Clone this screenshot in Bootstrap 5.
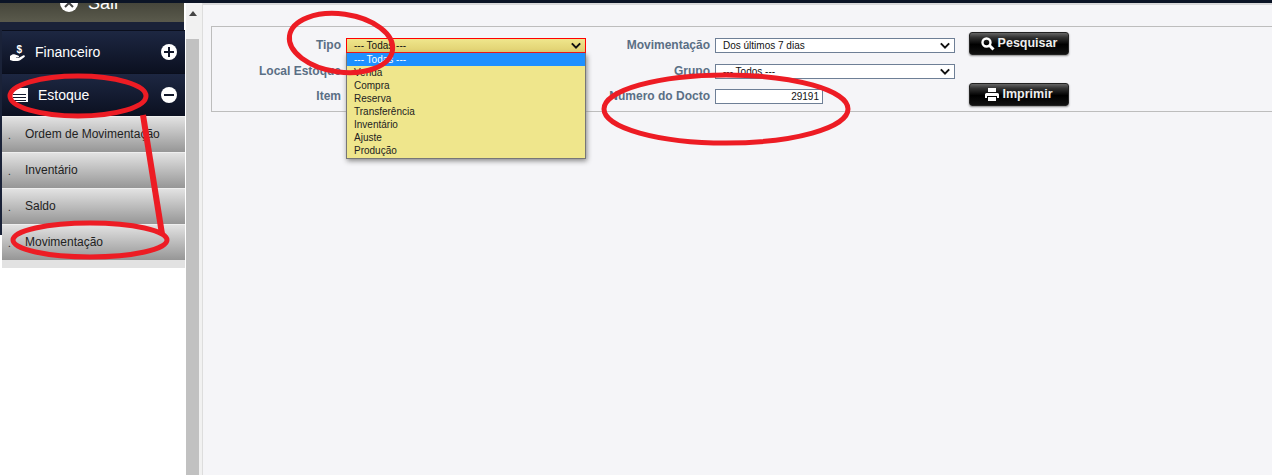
<!DOCTYPE html>
<html lang="pt"><head><meta charset="utf-8"><title>Movimentação</title>
<link href="https://cdn.jsdelivr.net/npm/bootstrap@5.3.0/dist/css/bootstrap.min.css" rel="stylesheet">
<style>
html,body{height:100%;overflow:hidden}
body{background:#f5f5f8;font-family:"Liberation Sans",Arial,sans-serif;color:#000}
.shell{height:475px;position:relative}
.topline{height:3px;background:#0b1426;flex:none}
.side{width:186px;flex:none;background:#fff;height:472px}
.sairbar{height:19px;width:184px;background:linear-gradient(#46463b,#5a5a4c);color:#fff;font-size:18px;overflow:hidden;line-height:1}
.sairin{margin-top:-9px;padding-left:60px;gap:10px}
.navwrap{background:linear-gradient(#1a2238 213px,#fff 213px);padding-top:8px;width:184px}
.menuhd{height:43px;margin-left:2px;width:183px;background:linear-gradient(#1d2742,#0b1020);border-top:1px solid #0a0e1c;color:#fff;font-size:14px;padding:0 8px}
.menuhd svg{flex:none}
.icw{margin-right:10px}
.circ{width:16px;height:16px;border-radius:50%;background:#fff;position:relative;flex:none;margin-left:auto}
.circ::before{content:"";position:absolute;left:3px;right:3px;top:7px;height:2px;background:#101629}
.circ.plus::after{content:"";position:absolute;top:3px;bottom:3px;left:7px;width:2px;background:#101629}
.sub{height:36px;margin-left:2px;width:183px;background:linear-gradient(#e2e2e2,#969696);border-top:1px solid #eee;font-size:12px;color:#222;padding:0 0 2px 6px;gap:14px;white-space:nowrap}
.subend{height:8px;margin-left:2px;width:183px;background:#e2e2e2}
.dotm{font-size:10px;width:3px;line-height:1;padding-top:4px}
.sbar{width:16px;flex:none;background:#f1f1f1;height:472px}
.sbtop{height:36px;text-align:center;padding-top:8px}
.sbarrow{display:block;width:0;height:0;margin-left:3px;border:4px solid transparent;border-top:0;border-bottom:5px solid #444}
.sbthumb{height:436px;background:#c1c1c1;width:13px}
.main{flex:1 1 auto;padding-top:21px;border-left:1px solid #ddd;min-width:0;border-top:2px solid #d8d8da}
.fbox{margin-left:8px;height:86px;border:1px solid #bdbdbd;border-right:0;position:relative;padding-top:11px}
.lbl{font-size:12px;font-weight:700;color:#5a6f85;text-align:right;flex:none;white-space:nowrap;line-height:14px}
.rowa{height:26px}
.rowb{height:25px}
.col1{width:129px}
.col2{width:124px}
.fake{font-size:10px;height:15px;border:1px solid #6e7f96;background:#fff;padding-left:7px;line-height:13px;position:relative;flex:none;color:#111}
.chev{position:absolute;right:4px;top:3px;width:10px;height:7px}
.s1{width:240px;margin-left:5px}
.s1.act{background:linear-gradient(#efe68c,#e0d070);border-color:#f00}
.s2{width:240px;margin-left:5px}
.num{width:108px;margin-left:5px;text-align:right;padding-right:3px;padding-left:0}
.bt{width:100px;height:23px;border:1px solid #222;border-radius:3px;background:linear-gradient(#666 0,#333 20%,#000 55%,#111 100%);color:#eee;font-size:12.500px;font-weight:700;box-shadow:0 1px 2px #888;padding:0;gap:3px;line-height:1;flex:none}
.bt:hover{color:#eee}
.btcol{position:absolute;left:757px}
.bt1{top:5px}
.bt2{top:56px}
.drop{position:absolute;left:346px;top:53px;width:240px;height:106px;background:#efe68c;border:1px solid #777;border-top:0;box-shadow:1px 2px 5px #888;font-size:10px;line-height:13px;color:#222;z-index:3;margin:0;padding:0;list-style:none}
.drop li{padding-left:7px;height:13px}
.drop li.on{background:#1e90ff;color:#fff}
.ink{position:absolute;left:0;top:0;z-index:5;pointer-events:none}
</style></head>
<body>
<div class="shell">
 <div class="topline"></div>
 <div class="d-flex">
  <aside class="side">
   <div class="sairbar"><div class="sairin d-flex align-items-center"><svg width="18" height="18" viewBox="0 0 18 18"><circle cx="9" cy="9" r="9" fill="#fff"/><path d="M5 5l8 8M13 5l-8 8" stroke="#444" stroke-width="2"/></svg><span>Sair</span></div></div>
   <div class="navwrap">
   <div class="menuhd d-flex align-items-center"><svg width="17" height="17" viewBox="0 0 17 17" fill="#fff" class="me-2"><path d="M0 12c2-1.500 3-2 5-1.500l3 1c1.500.3 1.500 1.800 0 1.800H6v.5h3l4-2.300c1.500-.8 2.500.5 1.500 1.500L10.500 16c-1 .7-2 1-3 1H3l-3-1z"/><text x="6.500" y="8.500" font-size="10" font-weight="700" font-family="Liberation Sans">$</text></svg><span>Financeiro</span><span class="circ plus"></span></div>
   <div class="menuhd d-flex align-items-center"><svg width="18" height="14" viewBox="0 0 18 14" fill="#fff" class="icw"><path d="M0 5L9 0h9v14H0zM3 6v1h13V6zm0 3v1h13V9zm0 3v1h13v-1z"/></svg><span>Estoque</span><span class="circ"></span></div>
   <div class="sub d-flex align-items-center"><span class="dotm">.</span><span>Ordem de Movimentação</span></div>
   <div class="sub d-flex align-items-center"><span class="dotm">.</span><span>Inventário</span></div>
   <div class="sub d-flex align-items-center"><span class="dotm">.</span><span>Saldo</span></div>
   <div class="sub d-flex align-items-center"><span class="dotm">.</span><span>Movimentação</span></div>
   <div class="subend"></div>
   </div>
  </aside>
  <div class="sbar"><div class="sbtop"><span class="sbarrow"></span></div><div class="sbthumb"></div></div>
  <main class="main">
   <div class="fbox">
    <div class="d-flex rowa align-items-start"><span class="lbl col1">Tipo</span><div class="fake s1 act">--- Todas ---<svg class="chev" viewBox="0 0 12 7"><path d="M1 1l5 5 5-5" fill="none" stroke="#111" stroke-width="2.400"/></svg></div><span class="lbl col2">Movimentação</span><div class="fake s2">Dos últimos 7 dias<svg class="chev" viewBox="0 0 12 7"><path d="M1 1l5 5 5-5" fill="none" stroke="#111" stroke-width="2.400"/></svg></div></div>
    <div class="d-flex rowb align-items-start"><span class="lbl col1">Local Estoque</span><div class="fake s1"></div><span class="lbl col2">Grupo</span><div class="fake s2">--- Todos ---<svg class="chev" viewBox="0 0 12 7"><path d="M1 1l5 5 5-5" fill="none" stroke="#111" stroke-width="2.400"/></svg></div></div>
    <div class="d-flex rowa align-items-start"><span class="lbl col1">Item</span><div class="fake s1"></div><span class="lbl col2">Numero do Docto</span><div class="fake num">29191</div></div>
    <button type="button" class="btn bt btcol bt1 d-flex align-items-center justify-content-center"><svg width="14" height="14" viewBox="0 0 14 14"><circle cx="5.500" cy="5.500" r="4" fill="none" stroke="#fff" stroke-width="2.400"/><path d="M8.500 8.500l4 4" stroke="#fff" stroke-width="3"/></svg>Pesquisar</button>
    <button type="button" class="btn bt btcol bt2 d-flex align-items-center justify-content-center"><svg width="14" height="13" viewBox="0 0 14 13" fill="#fff"><path d="M3 0h8v4H3zM1.500 5h11q1.500 0 1.500 1.500V10h-2V8H2v2H0V6.500Q0 5 1.500 5zM3 9h8v4H3z"/></svg>Imprimir</button>
   </div>
  </main>
 </div>
 <ul class="drop"><li class="on">--- Todas ---</li><li>Venda</li><li>Compra</li><li>Reserva</li><li>Transferência</li><li>Inventário</li><li>Ajuste</li><li>Produção</li></ul>
 <svg class="ink" width="1272" height="475" fill="none" stroke="#ed1c24" stroke-width="5">
  <ellipse cx="341" cy="43" rx="52" ry="29" transform="rotate(8 341 43)"/>
  <ellipse cx="78" cy="96" rx="68" ry="20"/>
  <ellipse cx="90" cy="240" rx="77" ry="17"/>
  <ellipse cx="726" cy="109" rx="122" ry="34"/>
  <path d="M143 115l19 119" stroke-width="6"/>
 </svg>
</div>
<script src="https://cdn.jsdelivr.net/npm/bootstrap@5.3.0/dist/js/bootstrap.bundle.min.js"></script>
</body></html>
